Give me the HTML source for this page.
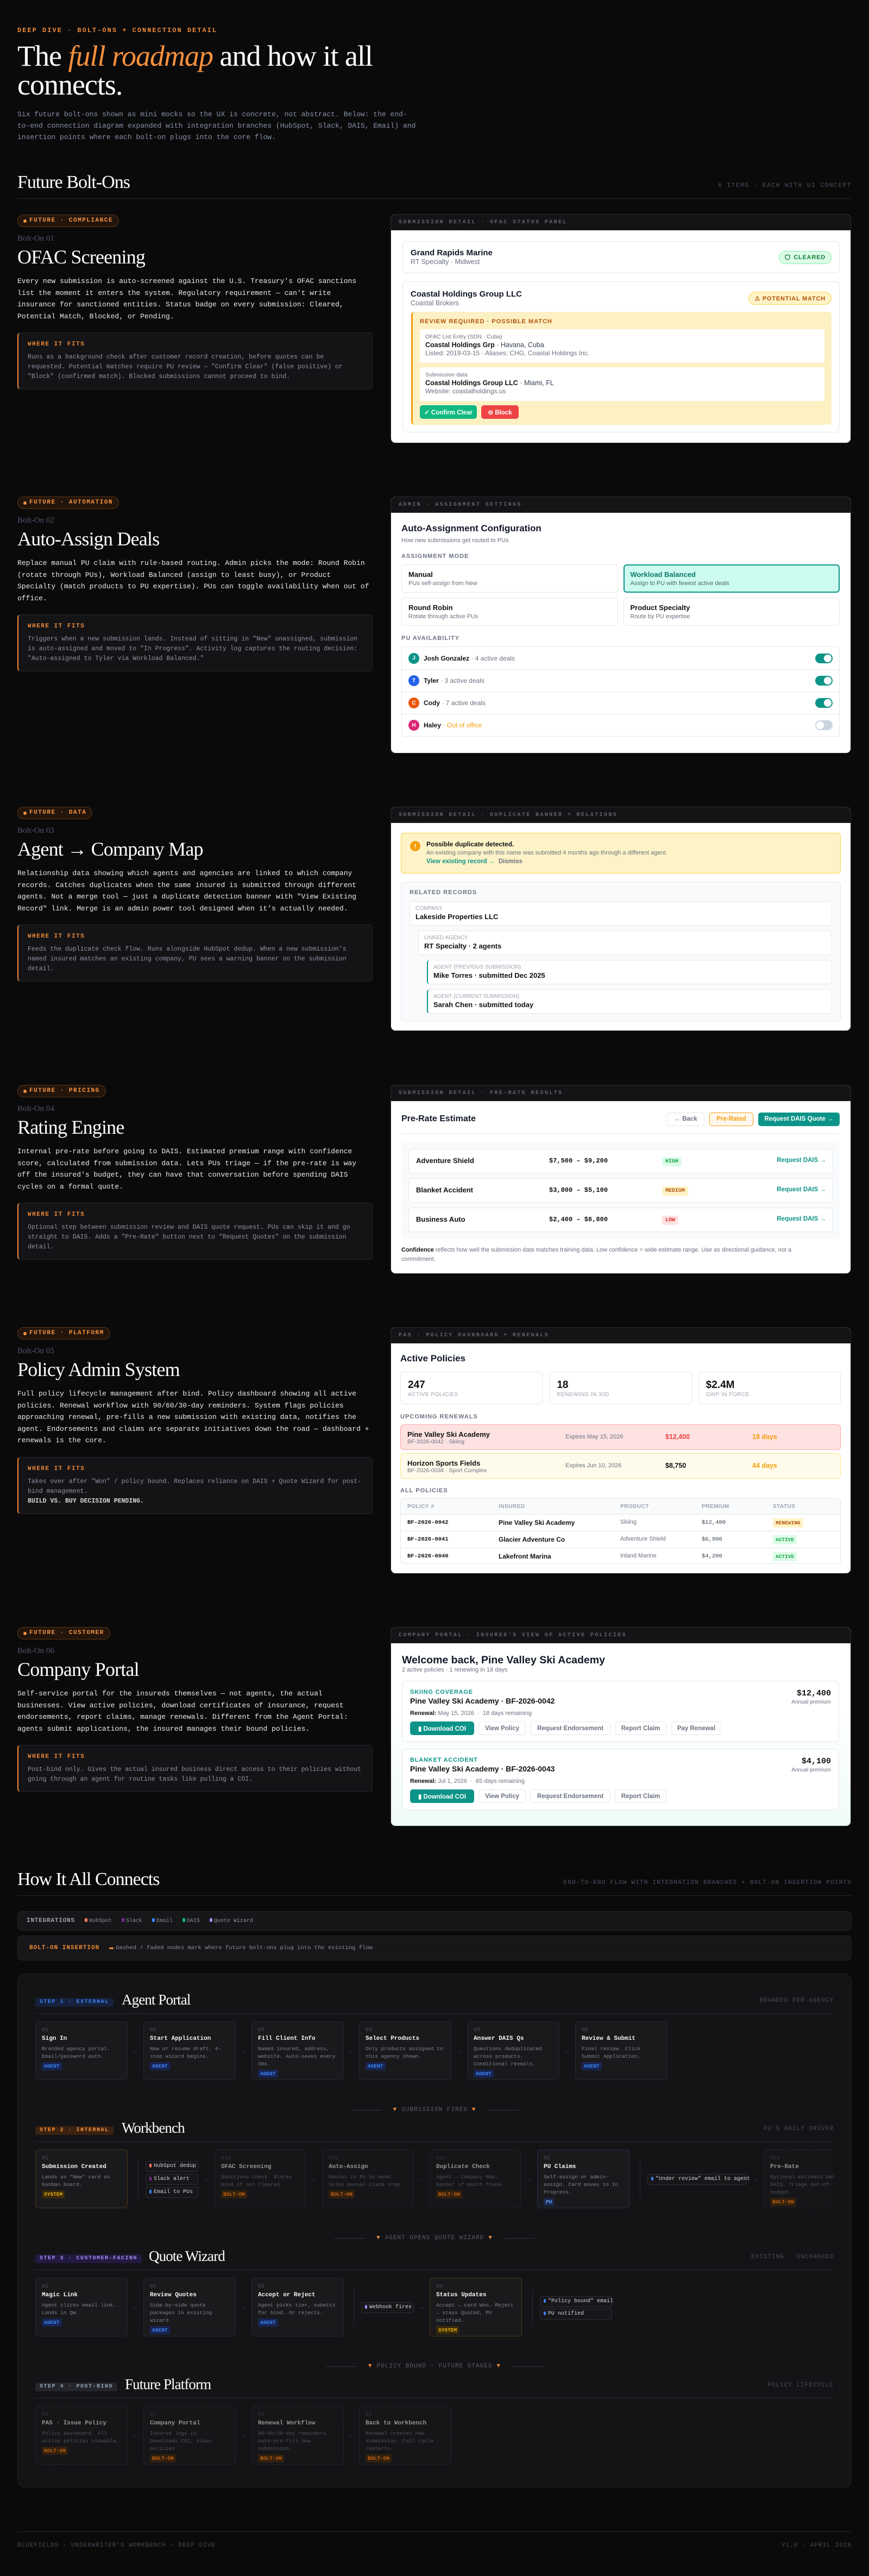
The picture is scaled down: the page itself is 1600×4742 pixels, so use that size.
<!DOCTYPE html>
<html><head><meta charset="utf-8"><style>
*{box-sizing:border-box;margin:0;padding:0}
body{width:1600px;height:4742px;background:#0a0a0b;position:relative;overflow:hidden;font-family:"Liberation Sans",sans-serif;color:#111}
.m{font-family:"Liberation Mono","DejaVu Sans Mono",monospace}
.s{font-family:"Liberation Serif",serif}
.a{position:absolute}
.nw{white-space:nowrap}
.eyebrow{left:32px;top:49px;font:700 12px/14px "Liberation Mono",monospace;color:#f08a36;letter-spacing:2px}
h1{position:absolute;left:32px;top:77px;font:400 54px/53px "Liberation Serif",serif;letter-spacing:-1px;color:#fff;white-space:nowrap}
h1 em{color:#f5903e}
.intro{left:32px;top:200px;font:13px/21px "Liberation Mono",monospace;color:#8892a6;white-space:nowrap}
.sech{font:400 34px/40px "Liberation Serif",serif;letter-spacing:-1px;color:#fff}
.secr{font:11px/14px "Liberation Mono",monospace;letter-spacing:1.6px;color:#4d5362}
.rule{height:1px;background:#27272b}
.left{position:absolute;left:32px;width:654px}
.pill{display:inline-flex;align-items:center;height:23px;padding:0 10px;border:1px solid #5c3514;background:#23150b;border-radius:12px;font:700 11px/1 "Liberation Mono",monospace;letter-spacing:1.5px;color:#f59342;white-space:nowrap}
.pill i{display:inline-block;width:6px;height:6px;border-radius:3px;background:#f59342;margin-right:5px}
.bolt{margin-top:12px;font:15px/18px "Liberation Serif",serif;color:#50566a}
.left h2{margin-top:5px;font:400 36px/40px "Liberation Serif",serif;letter-spacing:-.8px;color:#fff;white-space:nowrap}
.para{margin-top:14px;font:13px/21.5px "Liberation Mono",monospace;color:#ebebeb;white-space:nowrap}
.fits{margin-top:19px;background:#141417;border:1px solid #25252a;border-left:2px solid #f08a36;border-radius:6px;padding:14px 17px 13px}
.fl{font:700 11px/14px "Liberation Mono",monospace;letter-spacing:1.5px;color:#f08a36}
.ft{margin-top:8px;font:11.5px/18px "Liberation Mono",monospace;color:#8d93a0;white-space:nowrap}
.ft b{color:#d8d8d8}
.panel{position:absolute;left:719px;width:848px;background:#fff;border-radius:9px;overflow:hidden;border:1px solid #2a2a2e}
.ph{height:29px;background:#141417;padding-left:14px;font:700 10px/29px "Liberation Mono",monospace;letter-spacing:2.4px;color:#60646e;border-bottom:1px solid #222}
.card{border:1px solid #e5e7eb;border-radius:8px;background:#fff}
.t15{font-weight:700;font-size:15px;line-height:18px;color:#111827}
.sub{font-size:12.5px;line-height:15px;color:#6b7280}
.badge{display:inline-flex;align-items:center;height:24px;padding:0 10px;border-radius:12px;font-weight:700;font-size:11px;letter-spacing:.8px;white-space:nowrap}
.lab{font-weight:700;font-size:11px;line-height:14px;letter-spacing:1px;color:#6b7280;text-transform:uppercase}
.btn{display:inline-flex;align-items:center;justify-content:center;height:25px;border-radius:5px;font-weight:700;font-size:11.5px;white-space:nowrap}
.wb{background:#fff;border:1px solid #e5e7eb;color:#6b7280}
/* flow */
.fbar{position:absolute;left:32px;width:1536px;background:#17171a;border:1px solid #242428;border-radius:9px;display:flex;align-items:center;white-space:nowrap}
.sp{position:absolute;left:65px;height:16px;padding:0 8px;border-radius:3px;font:700 10px/16px "Liberation Mono",monospace;letter-spacing:1.5px;white-space:nowrap}
.st{position:absolute;font:400 27px/30px "Liberation Serif",serif;letter-spacing:-.9px;color:#fff;white-space:nowrap}
.sr{position:absolute;right:65px;font:11px/14px "Liberation Mono",monospace;letter-spacing:1px;color:#474c57;white-space:nowrap}
.srule{position:absolute;left:65px;width:1470px;height:1px;background:#29292e}
.fc{position:absolute;width:170px;height:108px;background:#1a1a1d;border:1px solid #26272d;border-radius:6px;padding:10px 11px 0;font-family:"Liberation Mono",monospace;overflow:hidden}
.fc .n{font-size:10px;line-height:12px;color:#4b4f58}
.fc .h{margin-top:2px;font-weight:700;font-size:11px;line-height:14px;color:#f4f4f5;white-space:nowrap}
.fc .d{margin-top:5px;font-size:9.5px;line-height:14px;color:#7d828c;white-space:nowrap}
.fc .g{display:inline-block;margin-top:2px;height:15px;padding:0 4px;border-radius:2px;font-size:9.5px;line-height:15px;font-weight:700}
.fc.dash{border:1px dashed #2c2c31;background:#161619}
.fc.dash .n,.fc.dash .h,.fc.dash .d{opacity:.55}
.ga{background:#172554;color:#3b82f6}
.gs{background:#3a2a0c;color:#eab308}
.gb{background:#33200e;color:#c2620f}
.gp{background:#1c2a4d;color:#60a5fa}
.ar{position:absolute;font:10px/10px "Liberation Mono",monospace;color:#4b4f58}
.chip{position:absolute;height:20px;border:1px solid #2f2f35;background:#17171a;border-radius:4px;padding:0 6px;font:10px/18px "Liberation Mono",monospace;color:#d4d4d8;white-space:nowrap}
.chip i{display:inline-block;width:4px;height:7px;border-radius:2px;margin-right:4px;vertical-align:-1px}
.vs{position:absolute;width:1px;background:#2a2a2f}
.div{position:absolute;left:0;width:1600px;display:flex;justify-content:center;align-items:center;font:11px/14px "Liberation Mono",monospace;letter-spacing:1px;color:#575d68;white-space:nowrap}
.div .ln{width:56px;height:1px;background:#333339;margin:0 14px}
.div .tr{color:#f08a36;font-size:11px;margin:0 8px}
</style></head><body>

<div class="a eyebrow">DEEP DIVE · BOLT-ONS + CONNECTION DETAIL</div>
<h1>The <em>full roadmap</em> and how it all<br>connects.</h1>
<div class="a intro">Six future bolt-ons shown as mini mocks so the UX is concrete, not abstract. Below: the end-<br>to-end connection diagram expanded with integration branches (HubSpot, Slack, DAIS, Email) and<br>insertion points where each bolt-on plugs into the core flow.</div>

<div class="a sech nw" style="left:32px;top:316px">Future Bolt-Ons</div>
<div class="a secr" style="right:32px;top:335px">6 ITEMS · EACH WITH UI CONCEPT</div>
<div class="a rule" style="left:32px;top:365px;width:1536px"></div>

<!-- SECTION 1 -->
<div class="left" style="top:395px">
<div class="pill"><i></i>FUTURE · COMPLIANCE</div>
<div class="bolt">Bolt-On 01</div>
<h2>OFAC Screening</h2>
<div class="para">Every new submission is auto-screened against the U.S. Treasury's OFAC sanctions<br>list the moment it enters the system. Regulatory requirement — can't write<br>insurance for sanctioned entities. Status badge on every submission: Cleared,<br>Potential Match, Blocked, or Pending.</div>
<div class="fits"><div class="fl">WHERE IT FITS</div><div class="ft">Runs as a background check after customer record creation, before quotes can be<br>requested. Potential matches require PU review — "Confirm Clear" (false positive) or<br>"Block" (confirmed match). Blocked submissions cannot proceed to bind.</div></div>
</div>
<div class="panel" style="top:394px;height:422px">
<div class="ph">SUBMISSION DETAIL · OFAC STATUS PANEL</div>
<div style="padding:20px 20px 0 21px">
 <div class="card" style="height:59px;display:flex;align-items:center;justify-content:space-between;padding:0 14px">
  <div><div class="t15">Grand Rapids Marine</div><div class="sub">RT Specialty · Midwest</div></div>
  <div class="badge" style="background:#dcfce7;border:1px solid #86efac;color:#15803d"><svg width="10" height="11" viewBox="0 0 10 11" style="margin-right:6px"><path d="M5 1 L9 2.5 V5.5 C9 8 7 9.5 5 10 C3 9.5 1 8 1 5.5 V2.5 Z" fill="none" stroke="#15803d" stroke-width="1.4"/></svg>CLEARED</div>
 </div>
 <div class="card" style="margin-top:15px;height:278px;padding:14px 14px 0">
  <div style="display:flex;justify-content:space-between;align-items:flex-start">
   <div><div class="t15">Coastal Holdings Group LLC</div><div class="sub">Coastal Brokers</div></div>
   <div class="badge" style="margin-top:4px;background:#fef3c7;border:1px solid #fcd34d;color:#b45309">⚠ POTENTIAL MATCH</div>
  </div>
  <div style="margin-top:8px;margin-left:1px;height:208px;background:#fdf1c4;border-left:3px solid #f59e0b;border-radius:6px;padding:11px 13px 0">
   <div style="font-weight:700;font-size:11px;line-height:14px;letter-spacing:1px;color:#b45309">REVIEW REQUIRED · POSSIBLE MATCH</div>
   <div style="margin-top:7px;height:62px;background:#fff;border-radius:4px;padding:7px 10px 0;line-height:15px">
    <div style="font-size:10.5px;color:#6b7280">OFAC List Entry (SDN · Cuba)</div>
    <div style="font-size:12.5px;color:#374151"><b style="color:#111">Coastal Holdings Grp</b> · Havana, Cuba</div>
    <div style="font-size:12px;color:#6b7280">Listed: 2019-03-15 · Aliases: CHG, Coastal Holdings Inc.</div>
   </div>
   <div style="margin-top:8px;height:62px;background:#fff;border-radius:4px;padding:7px 10px 0;line-height:15px">
    <div style="font-size:10.5px;color:#6b7280">Submission data</div>
    <div style="font-size:12.5px;color:#374151"><b style="color:#111">Coastal Holdings Group LLC</b> · Miami, FL</div>
    <div style="font-size:12px;color:#6b7280">Website: coastalholdings.us</div>
   </div>
   <div style="margin-top:8px;display:flex;gap:8px">
    <div class="btn" style="width:105px;background:#10b981;color:#fff">✓ Confirm Clear</div>
    <div class="btn" style="width:69px;background:#ef4444;color:#fff">⊖ Block</div>
   </div>
  </div>
 </div>
</div></div>

<!-- SECTION 2 -->
<div class="left" style="top:914px">
<div class="pill"><i></i>FUTURE · AUTOMATION</div>
<div class="bolt">Bolt-On 02</div>
<h2>Auto-Assign Deals</h2>
<div class="para">Replace manual PU claim with rule-based routing. Admin picks the mode: Round Robin<br>(rotate through PUs), Workload Balanced (assign to least busy), or Product<br>Specialty (match products to PU expertise). PUs can toggle availability when out of<br>office.</div>
<div class="fits"><div class="fl">WHERE IT FITS</div><div class="ft">Triggers when a new submission lands. Instead of sitting in "New" unassigned, submission<br>is auto-assigned and moved to "In Progress". Activity log captures the routing decision:<br>"Auto-assigned to Tyler via Workload Balanced."</div></div>
</div>
<div class="panel" style="top:914px;height:473px">
<div class="ph">ADMIN · ASSIGNMENT SETTINGS</div>
<div style="padding:18px 20px 0 19px">
 <div style="font-weight:700;font-size:17px;line-height:22px;color:#111827">Auto-Assignment Configuration</div>
 <div style="margin-top:3px;font-size:11px;line-height:16px;color:#6b7280">How new submissions get routed to PUs</div>
 <div class="lab" style="margin-top:14px">Assignment Mode</div>
 <div style="margin-top:8px;display:grid;grid-template-columns:1fr 1fr;gap:9px 10px">
  <div class="card" style="height:52px;padding:10px 12px 0;border-radius:6px"><div style="font-weight:700;font-size:13px;line-height:16px">Manual</div><div style="font-size:11px;line-height:16px;color:#6b7280">PUs self-assign from New</div></div>
  <div style="height:52px;padding:9px 11px 0;border-radius:6px;border:2px solid #0d9488;background:#ccfbef"><div style="font-weight:700;font-size:13px;line-height:16px;color:#0f766e">Workload Balanced</div><div style="font-size:11px;line-height:16px;color:#4b6b66">Assign to PU with fewest active deals</div></div>
  <div class="card" style="height:52px;padding:10px 12px 0;border-radius:6px"><div style="font-weight:700;font-size:13px;line-height:16px">Round Robin</div><div style="font-size:11px;line-height:16px;color:#6b7280">Rotate through active PUs</div></div>
  <div class="card" style="height:52px;padding:10px 12px 0;border-radius:6px"><div style="font-weight:700;font-size:13px;line-height:16px">Product Specialty</div><div style="font-size:11px;line-height:16px;color:#6b7280">Route by PU expertise</div></div>
 </div>
 <div class="lab" style="margin-top:16px">PU Availability</div>
 <div style="margin-top:8px;border:1px solid #e5e7eb;border-radius:6px">
  <div style="height:41px;display:flex;align-items:center;padding:0 12px;font-size:12px"><span style="width:20px;height:20px;border-radius:10px;background:#0d9488;color:#fff;font-size:10px;font-weight:700;display:inline-flex;align-items:center;justify-content:center;margin-right:8px">J</span><b>Josh Gonzalez</b><span style="color:#6b7280">&nbsp;· 4 active deals</span><span style="margin-left:auto;width:32px;height:18px;border-radius:9px;background:#0d9488;position:relative"><span style="position:absolute;right:2px;top:2px;width:14px;height:14px;border-radius:7px;background:#fff"></span></span></div>
  <div style="height:41px;display:flex;align-items:center;padding:0 12px;font-size:12px;border-top:1px solid #e5e7eb"><span style="width:20px;height:20px;border-radius:10px;background:#2563eb;color:#fff;font-size:10px;font-weight:700;display:inline-flex;align-items:center;justify-content:center;margin-right:8px">T</span><b>Tyler</b><span style="color:#6b7280">&nbsp;· 3 active deals</span><span style="margin-left:auto;width:32px;height:18px;border-radius:9px;background:#0d9488;position:relative"><span style="position:absolute;right:2px;top:2px;width:14px;height:14px;border-radius:7px;background:#fff"></span></span></div>
  <div style="height:41px;display:flex;align-items:center;padding:0 12px;font-size:12px;border-top:1px solid #e5e7eb"><span style="width:20px;height:20px;border-radius:10px;background:#ea580c;color:#fff;font-size:10px;font-weight:700;display:inline-flex;align-items:center;justify-content:center;margin-right:8px">C</span><b>Cody</b><span style="color:#6b7280">&nbsp;· 7 active deals</span><span style="margin-left:auto;width:32px;height:18px;border-radius:9px;background:#0d9488;position:relative"><span style="position:absolute;right:2px;top:2px;width:14px;height:14px;border-radius:7px;background:#fff"></span></span></div>
  <div style="height:41px;display:flex;align-items:center;padding:0 12px;font-size:12px;border-top:1px solid #e5e7eb"><span style="width:20px;height:20px;border-radius:10px;background:#db2777;color:#fff;font-size:10px;font-weight:700;display:inline-flex;align-items:center;justify-content:center;margin-right:8px">H</span><b>Haley</b><span style="color:#f59e0b">&nbsp;· Out of office</span><span style="margin-left:auto;width:32px;height:18px;border-radius:9px;background:#cbd5e1;position:relative"><span style="position:absolute;left:2px;top:2px;width:14px;height:14px;border-radius:7px;background:#fff"></span></span></div>
 </div>
</div></div>

<!-- SECTION 3 -->
<div class="left" style="top:1485px">
<div class="pill"><i></i>FUTURE · DATA</div>
<div class="bolt">Bolt-On 03</div>
<h2>Agent → Company Map</h2>
<div class="para">Relationship data showing which agents and agencies are linked to which company<br>records. Catches duplicates when the same insured is submitted through different<br>agents. Not a merge tool — just a duplicate detection banner with "View Existing<br>Record" link. Merge is an admin power tool designed when it's actually needed.</div>
<div class="fits"><div class="fl">WHERE IT FITS</div><div class="ft">Feeds the duplicate check flow. Runs alongside HubSpot dedup. When a new submission's<br>named insured matches an existing company, PU sees a warning banner on the submission<br>detail.</div></div>
</div>
<div class="panel" style="top:1485px;height:413px">
<div class="ph">SUBMISSION DETAIL · DUPLICATE BANNER + RELATIONS</div>
<div style="padding:18px 18px 0 18px">
 <div style="height:75px;background:#fef3c7;border:1.5px solid #fcd34d;border-radius:6px;position:relative;padding:12px 0 0 46px">
  <span style="position:absolute;left:16px;top:14px;width:19px;height:19px;border-radius:10px;background:#f59e0b;color:#fff;font-weight:700;font-size:12px;display:flex;align-items:center;justify-content:center">!</span>
  <div style="font-weight:700;font-size:12px;line-height:16px;color:#111">Possible duplicate detected.</div>
  <div style="font-size:11px;line-height:16px;color:#6b7280">An existing company with this name was submitted 4 months ago through a different agent.</div>
  <div style="font-weight:700;font-size:11.5px;line-height:17px"><span style="color:#0d9488">View existing record →</span>&nbsp; <span style="color:#6b7280">Dismiss</span></div>
 </div>
 <div style="margin-top:15px;height:257px;background:#f8fafc;border:1px solid #e5e7eb;border-radius:6px;padding:12px 15px 0">
  <div class="lab">Related Records</div>
  <div class="card" style="margin-top:9px;height:45px;border-radius:5px;padding:7px 10px 0"><div style="font-size:10px;line-height:12px;color:#9ca3af">COMPANY</div><div style="font-weight:700;font-size:13px;line-height:18px">Lakeside Properties LLC</div></div>
  <div class="card" style="margin-top:9px;margin-left:16px;height:45px;border-radius:5px;padding:7px 10px 0"><div style="font-size:10px;line-height:12px;color:#9ca3af">LINKED AGENCY</div><div style="font-weight:700;font-size:13px;line-height:18px">RT Specialty · 2 agents</div></div>
  <div class="card" style="margin-top:9px;margin-left:32px;height:45px;border-radius:5px;border-left:2px solid #0d9488;padding:7px 10px 0"><div style="font-size:10px;line-height:12px;color:#9ca3af">AGENT (PREVIOUS SUBMISSION)</div><div style="font-weight:700;font-size:13px;line-height:18px">Mike Torres · submitted Dec 2025</div></div>
  <div class="card" style="margin-top:9px;margin-left:32px;height:45px;border-radius:5px;border-left:2px solid #0d9488;padding:7px 10px 0"><div style="font-size:10px;line-height:12px;color:#9ca3af">AGENT (CURRENT SUBMISSION)</div><div style="font-weight:700;font-size:13px;line-height:18px">Sarah Chen · submitted today</div></div>
 </div>
</div></div>

<!-- SECTION 4 -->
<div class="left" style="top:1997px">
<div class="pill"><i></i>FUTURE · PRICING</div>
<div class="bolt">Bolt-On 04</div>
<h2>Rating Engine</h2>
<div class="para">Internal pre-rate before going to DAIS. Estimated premium range with confidence<br>score, calculated from submission data. Lets PUs triage — if the pre-rate is way<br>off the insured's budget, they can have that conversation before spending DAIS<br>cycles on a formal quote.</div>
<div class="fits"><div class="fl">WHERE IT FITS</div><div class="ft">Optional step between submission review and DAIS quote request. PUs can skip it and go<br>straight to DAIS. Adds a "Pre-Rate" button next to "Request Quotes" on the submission<br>detail.</div></div>
</div>
<div class="panel" style="top:1997px;height:348px">
<div class="ph">SUBMISSION DETAIL · PRE-RATE RESULTS</div>
<div style="padding:19px 20px 0 19px">
 <div style="height:28px;display:flex;align-items:center">
  <div style="font-weight:700;font-size:16px;color:#111827">Pre-Rate Estimate</div>
  <div style="margin-left:auto;display:flex;gap:9px">
   <div class="btn wb" style="width:69px">← Back</div>
   <div class="btn" style="width:81px;background:#fff7ed;border:1.5px solid #f59e0b;color:#f59e0b">Pre-Rated</div>
   <div class="btn" style="width:150px;background:#0d9488;color:#fff">Request DAIS Quote →</div>
  </div>
 </div>
 <div style="margin-top:12px;height:1px;background:#e5e7eb"></div>
 <div style="margin-top:16px;height:178px;background:#f8fafc;border-radius:6px;padding:12px 13px 0">
  <div class="card" style="height:45px;border-radius:5px;position:relative;font-size:13px">
   <b class="a" style="left:13px;top:13px">Adventure Shield</b><b class="a m" style="left:258px;top:14px;font-size:12px">$7,500 – $9,200</b>
   <span class="a" style="left:466px;top:14px;height:17px;padding:0 6px;background:#dcfce7;color:#16a34a;font:700 10px/17px 'Liberation Mono',monospace;border-radius:3px">HIGH</span>
   <b class="a" style="right:11px;top:14px;font-size:11.5px;color:#0d9488">Request DAIS →</b></div>
  <div class="card" style="margin-top:9px;height:45px;border-radius:5px;position:relative;font-size:13px">
   <b class="a" style="left:13px;top:13px">Blanket Accident</b><b class="a m" style="left:258px;top:14px;font-size:12px">$3,800 – $5,100</b>
   <span class="a" style="left:466px;top:14px;height:17px;padding:0 6px;background:#fef3c7;color:#b45309;font:700 10px/17px 'Liberation Mono',monospace;border-radius:3px">MEDIUM</span>
   <b class="a" style="right:11px;top:14px;font-size:11.5px;color:#0d9488">Request DAIS →</b></div>
  <div class="card" style="margin-top:9px;height:45px;border-radius:5px;position:relative;font-size:13px">
   <b class="a" style="left:13px;top:13px">Business Auto</b><b class="a m" style="left:258px;top:14px;font-size:12px">$2,400 – $6,800</b>
   <span class="a" style="left:466px;top:14px;height:17px;padding:0 6px;background:#fee2e2;color:#dc2626;font:700 10px/17px 'Liberation Mono',monospace;border-radius:3px">LOW</span>
   <b class="a" style="right:11px;top:14px;font-size:11.5px;color:#0d9488">Request DAIS →</b></div>
 </div>
 <div class="nw" style="margin-top:12px;font-size:11px;line-height:17px;color:#6b7280"><b style="color:#111">Confidence</b> reflects how well the submission data matches training data. Low confidence = wide estimate range. Use as directional guidance, not a<br>commitment.</div>
</div></div>

<!-- SECTION 5 -->
<div class="left" style="top:2443px">
<div class="pill"><i></i>FUTURE · PLATFORM</div>
<div class="bolt">Bolt-On 05</div>
<h2>Policy Admin System</h2>
<div class="para">Full policy lifecycle management after bind. Policy dashboard showing all active<br>policies. Renewal workflow with 90/60/30-day reminders. System flags policies<br>approaching renewal, pre-fills a new submission with existing data, notifies the<br>agent. Endorsements and claims are separate initiatives down the road — dashboard +<br>renewals is the core.</div>
<div class="fits"><div class="fl">WHERE IT FITS</div><div class="ft">Takes over after "Won" / policy bound. Replaces reliance on DAIS + Quote Wizard for post-<br>bind management.<br><b>BUILD VS. BUY DECISION PENDING.</b></div></div>
</div>
<div class="panel" style="top:2443px;height:454px">
<div class="ph">PAS · POLICY DASHBOARD + RENEWALS</div>
<div style="padding:17px 18px 0 17px">
 <div style="font-weight:700;font-size:17px;line-height:22px;color:#111827">Active Policies</div>
 <div style="margin-top:13px;display:grid;grid-template-columns:1fr 1fr 1fr;gap:12px">
  <div class="card" style="height:60px;border-radius:6px;padding:13px 13px 0"><div style="font-weight:700;font-size:19px;line-height:22px">247</div><div style="font-size:10px;line-height:14px;color:#9ca3af;letter-spacing:.5px">ACTIVE POLICIES</div></div>
  <div class="card" style="height:60px;border-radius:6px;padding:13px 13px 0"><div style="font-weight:700;font-size:19px;line-height:22px">18</div><div style="font-size:10px;line-height:14px;color:#9ca3af;letter-spacing:.5px">RENEWING IN 30D</div></div>
  <div class="card" style="height:60px;border-radius:6px;padding:13px 13px 0"><div style="font-weight:700;font-size:19px;line-height:22px">$2.4M</div><div style="font-size:10px;line-height:14px;color:#9ca3af;letter-spacing:.5px">GWP IN FORCE</div></div>
 </div>
 <div class="lab" style="margin-top:16px">Upcoming Renewals</div>
 <div style="margin-top:7px;height:47px;background:#fee2e2;border:1px solid #fca5a5;border-radius:6px;position:relative">
  <div class="a" style="left:12px;top:10px"><div style="font-weight:700;font-size:13px;line-height:15px">Pine Valley Ski Academy</div><div style="font-size:10.5px;line-height:13px;color:#6b7280">BF-2026-0042 · Skiing</div></div>
  <span class="a" style="left:303px;top:16px;font-size:11px;color:#6b7280">Expires May 15, 2026</span>
  <b class="a" style="left:487px;top:15px;font-size:12.5px;color:#ef4444">$12,400</b>
  <b class="a" style="left:647px;top:15px;font-size:12.5px;color:#f59e0b">18 days</b></div>
 <div style="margin-top:6px;height:47px;background:#fffbeb;border:1px solid #fde68a;border-radius:6px;position:relative">
  <div class="a" style="left:12px;top:10px"><div style="font-weight:700;font-size:13px;line-height:15px">Horizon Sports Fields</div><div style="font-size:10.5px;line-height:13px;color:#6b7280">BF-2026-0038 · Sport Complex</div></div>
  <span class="a" style="left:303px;top:16px;font-size:11px;color:#6b7280">Expires Jun 10, 2026</span>
  <b class="a" style="left:487px;top:15px;font-size:12.5px;color:#111">$8,750</b>
  <b class="a" style="left:647px;top:15px;font-size:12.5px;color:#f59e0b">44 days</b></div>
 <div class="lab" style="margin-top:15px">All Policies</div>
 <div style="margin-top:7px;border:1px solid #e5e7eb;border-radius:6px;overflow:hidden;position:relative;height:121px">
  <div style="height:29px;background:#f8fafc;border-bottom:1px solid #e5e7eb;position:relative;font-weight:700;font-size:10px;color:#9ca3af;letter-spacing:.5px">
   <span class="a" style="left:12px;top:9px">POLICY #</span><span class="a" style="left:180px;top:9px">INSURED</span><span class="a" style="left:404px;top:9px">PRODUCT</span><span class="a" style="left:554px;top:9px">PREMIUM</span><span class="a" style="left:685px;top:9px">STATUS</span></div>
  <div style="height:31px;border-bottom:1px solid #e5e7eb;position:relative;font-size:12px">
   <b class="a m" style="left:12px;top:9px;font-size:10.5px">BF-2026-0042</b><b class="a" style="left:180px;top:8px">Pine Valley Ski Academy</b><span class="a" style="left:404px;top:8px;color:#6b7280;font-size:11px">Skiing</span><span class="a m" style="left:554px;top:9px;font-size:10.5px;color:#374151">$12,400</span><span class="a" style="left:685px;top:7px;height:17px;padding:0 5px;background:#fef3c7;color:#b45309;font:700 9.5px/17px 'Liberation Mono',monospace">RENEWING</span></div>
  <div style="height:31px;border-bottom:1px solid #e5e7eb;position:relative;font-size:12px">
   <b class="a m" style="left:12px;top:9px;font-size:10.5px">BF-2026-0041</b><b class="a" style="left:180px;top:8px">Glacier Adventure Co</b><span class="a" style="left:404px;top:8px;color:#6b7280;font-size:11px">Adventure Shield</span><span class="a m" style="left:554px;top:9px;font-size:10.5px;color:#374151">$6,900</span><span class="a" style="left:685px;top:7px;height:17px;padding:0 5px;background:#dcfce7;color:#16a34a;font:700 9.5px/17px 'Liberation Mono',monospace">ACTIVE</span></div>
  <div style="height:30px;position:relative;font-size:12px">
   <b class="a m" style="left:12px;top:9px;font-size:10.5px">BF-2026-0040</b><b class="a" style="left:180px;top:8px">Lakefront Marina</b><span class="a" style="left:404px;top:8px;color:#6b7280;font-size:11px">Inland Marine</span><span class="a m" style="left:554px;top:9px;font-size:10.5px;color:#374151">$4,200</span><span class="a" style="left:685px;top:7px;height:17px;padding:0 5px;background:#dcfce7;color:#16a34a;font:700 9.5px/17px 'Liberation Mono',monospace">ACTIVE</span></div>
 </div>
</div></div>

<!-- SECTION 6 -->
<div class="left" style="top:2995px">
<div class="pill"><i></i>FUTURE · CUSTOMER</div>
<div class="bolt">Bolt-On 06</div>
<h2>Company Portal</h2>
<div class="para">Self-service portal for the insureds themselves — not agents, the actual<br>businesses. View active policies, download certificates of insurance, request<br>endorsements, report claims, manage renewals. Different from the Agent Portal:<br>agents submit applications, the insured manages their bound policies.</div>
<div class="fits"><div class="fl">WHERE IT FITS</div><div class="ft">Post-bind only. Gives the actual insured business direct access to their policies without<br>going through an agent for routine tasks like pulling a COI.</div></div>
</div>
<div class="panel" style="top:2995px;height:367px">
<div class="ph">COMPANY PORTAL · INSURED'S VIEW OF ACTIVE POLICIES</div>
<div style="padding:20px 21px 0 20px;height:338px;background:linear-gradient(#fff 35%,#effcf9)">
 <div style="font-weight:700;font-size:19.5px;line-height:22px;color:#111827">Welcome back, Pine Valley Ski Academy</div>
 <div style="font-size:11px;line-height:14px;color:#6b7280">2 active policies · 1 renewing in 18 days</div>
 <div class="card" style="margin-top:13px;height:113px;position:relative;padding:13px 14px 0">
  <div style="font-weight:700;font-size:11px;line-height:14px;letter-spacing:.8px;color:#0d9488">SKIING COVERAGE</div>
  <div style="font-weight:700;font-size:14px;line-height:18px">Pine Valley Ski Academy · BF-2026-0042</div>
  <div style="margin-top:6px;font-size:11px;line-height:16px;color:#6b7280"><b style="color:#111">Renewal:</b> May 15, 2026 &nbsp;· &nbsp;18 days remaining</div>
  <div style="margin-top:7px;display:flex;gap:8px"><div class="btn" style="width:118px;background:#0d9488;color:#fff">▮ Download COI</div><div class="btn wb" style="width:87px">View Policy</div><div class="btn wb" style="width:148px">Request Endorsement</div><div class="btn wb" style="width:95px">Report Claim</div><div class="btn wb" style="width:94px">Pay Renewal</div></div>
  <div class="a" style="right:14px;top:14px;text-align:right"><div class="m" style="font-weight:700;font-size:15px;line-height:18px">$12,400</div><div style="font-size:10px;line-height:14px;color:#6b7280">Annual premium</div></div>
 </div>
 <div class="card" style="margin-top:12px;height:113px;position:relative;padding:13px 14px 0">
  <div style="font-weight:700;font-size:11px;line-height:14px;letter-spacing:.8px;color:#0d9488">BLANKET ACCIDENT</div>
  <div style="font-weight:700;font-size:14px;line-height:18px">Pine Valley Ski Academy · BF-2026-0043</div>
  <div style="margin-top:6px;font-size:11px;line-height:16px;color:#6b7280"><b style="color:#111">Renewal:</b> Jul 1, 2026 &nbsp;· &nbsp;65 days remaining</div>
  <div style="margin-top:7px;display:flex;gap:8px"><div class="btn" style="width:118px;background:#0d9488;color:#fff">▮ Download COI</div><div class="btn wb" style="width:87px">View Policy</div><div class="btn wb" style="width:148px">Request Endorsement</div><div class="btn wb" style="width:95px">Report Claim</div></div>
  <div class="a" style="right:14px;top:14px;text-align:right"><div class="m" style="font-weight:700;font-size:15px;line-height:18px">$4,100</div><div style="font-size:10px;line-height:14px;color:#6b7280">Annual premium</div></div>
 </div>
</div></div>

<!-- HOW IT ALL CONNECTS -->
<div class="a sech nw" style="left:32px;top:3440px">How It All Connects</div>
<div class="a secr" style="right:32px;top:3459px;letter-spacing:1.2px">END-TO-END FLOW WITH INTEGRATION BRANCHES + BOLT-ON INSERTION POINTS</div>
<div class="a rule" style="left:32px;top:3489px;width:1536px"></div>

<div class="fbar" style="top:3518px;height:36px;padding-left:16px;font:10px 'Liberation Mono',monospace;color:#8b8f99">
 <b style="font-size:11px;letter-spacing:.8px;color:#9ca3af;margin-right:18px">INTEGRATIONS</b>
 <span style="margin-right:18px"><i style="display:inline-block;width:5px;height:7px;border-radius:2px;background:#ff7a59;margin-right:3px"></i>HubSpot</span>
 <span style="margin-right:18px"><i style="display:inline-block;width:5px;height:7px;border-radius:2px;background:#7e2a8c;margin-right:3px"></i>Slack</span>
 <span style="margin-right:18px"><i style="display:inline-block;width:5px;height:7px;border-radius:2px;background:#3b82f6;margin-right:3px"></i>Email</span>
 <span style="margin-right:18px"><i style="display:inline-block;width:5px;height:7px;border-radius:2px;background:#10b981;margin-right:3px"></i>DAIS</span>
 <span><i style="display:inline-block;width:5px;height:7px;border-radius:2px;background:#a78bfa;margin-right:3px"></i>Quote Wizard</span>
</div>
<div class="fbar" style="top:3563px;height:46px;padding-left:21px;font:10.5px 'Liberation Mono',monospace;color:#8b8f99">
 <b style="font-size:11px;letter-spacing:1px;color:#f08a36;margin-right:18px">BOLT-ON INSERTION</b>
 <span style="display:inline-block;width:8px;height:3px;background:#f08a36;margin-right:4px"></span>Dashed / faded nodes mark where future bolt-ons plug into the existing flow
</div>

<div class="a" style="left:32px;top:3633px;width:1536px;height:946px;background:#141417;border:1px solid #232327;border-radius:14px"></div>

<!-- step 1 -->
<div class="sp" style="top:3678px;background:#16213d;color:#3b82f6">STEP 1 · EXTERNAL</div>
<div class="st" style="left:224px;top:3666px">Agent Portal</div>
<div class="sr" style="top:3676px">BRANDED PER-AGENCY</div>
<div class="srule" style="top:3706px"></div>
<div class="fc" style="left:65px;top:3721px"><div class="n">01</div><div class="h">Sign In</div><div class="d">Branded agency portal.<br>Email/password auth.</div><span class="g ga">AGENT</span></div>
<div class="ar" style="left:245px;top:3772px">→</div>
<div class="fc" style="left:264px;top:3721px"><div class="n">02</div><div class="h">Start Application</div><div class="d">New or resume draft. 4-<br>step wizard begins.</div><span class="g ga">AGENT</span></div>
<div class="ar" style="left:444px;top:3772px">→</div>
<div class="fc" style="left:463px;top:3721px"><div class="n">03</div><div class="h">Fill Client Info</div><div class="d">Named insured, address,<br>website. Auto-saves every<br>30s.</div><span class="g ga">AGENT</span></div>
<div class="ar" style="left:642px;top:3772px">→</div>
<div class="fc" style="left:661px;top:3721px"><div class="n">04</div><div class="h">Select Products</div><div class="d">Only products assigned to<br>this agency shown.</div><span class="g ga">AGENT</span></div>
<div class="ar" style="left:841px;top:3772px">→</div>
<div class="fc" style="left:860px;top:3721px"><div class="n">05</div><div class="h">Answer DAIS Qs</div><div class="d">Questions deduplicated<br>across products.<br>Conditional reveals.</div><span class="g ga">AGENT</span></div>
<div class="ar" style="left:1040px;top:3772px">→</div>
<div class="fc" style="left:1059px;top:3721px"><div class="n">06</div><div class="h">Review &amp; Submit</div><div class="d">Final review. Click<br>Submit Application.</div><span class="g ga">AGENT</span></div>

<div class="div" style="top:3877px"><span class="ln"></span><span class="tr">▼</span>SUBMISSION FIRES<span class="tr">▼</span><span class="ln"></span></div>

<!-- step 2 -->
<div class="sp" style="top:3914px;background:#3a2210;color:#fb923c">STEP 2 · INTERNAL</div>
<div class="st" style="left:224px;top:3902px">Workbench</div>
<div class="sr" style="top:3912px">PU'S DAILY DRIVER</div>
<div class="srule" style="top:3942px"></div>
<div class="fc" style="left:65px;top:3957px;border-color:#4f3614"><div class="n">01</div><div class="h">Submission Created</div><div class="d">Lands as "New" card on<br>Kanban board.</div><span class="g gs">SYSTEM</span></div>
<div class="vs" style="left:254px;top:3977px;height:70px"></div>
<div class="chip" style="left:268px;top:3978px;width:97px"><i style="background:#ff7a59"></i>HubSpot dedup</div>
<div class="chip" style="left:268px;top:4002px;width:97px"><i style="background:#7e2a8c"></i>Slack alert</div>
<div class="chip" style="left:268px;top:4026px;width:97px"><i style="background:#3b82f6"></i>Email to PUs</div>
<div class="ar" style="left:376px;top:4008px">→</div>
<div class="fc dash" style="left:395px;top:3957px;width:168px"><div class="n">01a</div><div class="h">OFAC Screening</div><div class="d">Sanctions check. Blocks<br>bind if not cleared.</div><span class="g gb">BOLT-ON</span></div>
<div class="ar" style="left:574px;top:4008px">→</div>
<div class="fc dash" style="left:593px;top:3957px;width:168px"><div class="n">01b</div><div class="h">Auto-Assign</div><div class="d">Routes to PU by mode.<br>Skips manual claim step.</div><span class="g gb">BOLT-ON</span></div>
<div class="ar" style="left:772px;top:4008px">→</div>
<div class="fc dash" style="left:791px;top:3957px;width:168px"><div class="n">01c</div><div class="h">Duplicate Check</div><div class="d">Agent → Company Map.<br>Banner if match found.</div><span class="g gb">BOLT-ON</span></div>
<div class="ar" style="left:971px;top:4008px">→</div>
<div class="fc" style="left:989px;top:3957px;border-color:#233150"><div class="n">02</div><div class="h">PU Claims</div><div class="d">Self-assign or admin-<br>assign. Card moves to In<br>Progress.</div><span class="g gp">PU</span></div>
<div class="vs" style="left:1178px;top:3977px;height:70px"></div>
<div class="chip" style="left:1192px;top:4002px;width:183px"><i style="background:#3b82f6"></i>"Under review" email to agent</div>
<div class="ar" style="left:1387px;top:4008px">→</div>
<div style="position:absolute;left:1406px;top:3957px;width:129px;height:108px;overflow:hidden"><div class="fc dash" style="left:0;top:0"><div class="n">02a</div><div class="h">Pre-Rate</div><div class="d">Optional estimate before<br>DAIS. Triage out-of-<br>budget.</div><span class="g gb">BOLT-ON</span></div></div>

<div class="div" style="top:4113px"><span class="ln"></span><span class="tr">▼</span>AGENT OPENS QUOTE WIZARD<span class="tr">▼</span><span class="ln"></span></div>

<!-- step 3 -->
<div class="sp" style="top:4150px;background:#221a40;color:#a78bfa">STEP 3 · CUSTOMER-FACING</div>
<div class="st" style="left:274px;top:4138px">Quote Wizard</div>
<div class="sr" style="top:4148px">EXISTING · UNCHANGED</div>
<div class="srule" style="top:4178px"></div>
<div class="fc" style="left:65px;top:4193px"><div class="n">01</div><div class="h">Magic Link</div><div class="d">Agent clicks email link.<br>Lands in QW.</div><span class="g ga">AGENT</span></div>
<div class="ar" style="left:245px;top:4244px">→</div>
<div class="fc" style="left:264px;top:4193px"><div class="n">02</div><div class="h">Review Quotes</div><div class="d">Side-by-side quote<br>packages in existing<br>wizard.</div><span class="g ga">AGENT</span></div>
<div class="ar" style="left:444px;top:4244px">→</div>
<div class="fc" style="left:463px;top:4193px"><div class="n">03</div><div class="h">Accept or Reject</div><div class="d">Agent picks tier, submits<br>for bind. Or rejects.</div><span class="g ga">AGENT</span></div>
<div class="vs" style="left:651px;top:4213px;height:70px"></div>
<div class="chip" style="left:665px;top:4238px;width:97px"><i style="background:#a78bfa"></i>Webhook fires</div>
<div class="ar" style="left:774px;top:4244px">→</div>
<div class="fc" style="left:791px;top:4193px;border-color:#4f3614"><div class="n">04</div><div class="h">Status Updates</div><div class="d">Accept → card Won. Reject<br>→ stays Quoted, PU<br>notified.</div><span class="g gs">SYSTEM</span></div>
<div class="vs" style="left:980px;top:4213px;height:70px"></div>
<div class="chip" style="left:994px;top:4227px;width:133px"><i style="background:#3b82f6"></i>"Policy bound" email</div>
<div class="chip" style="left:994px;top:4250px;width:133px"><i style="background:#3b82f6"></i>PU notified</div>

<div class="div" style="top:4349px"><span class="ln"></span><span class="tr">▼</span>POLICY BOUND · FUTURE STAGES<span class="tr">▼</span><span class="ln"></span></div>

<!-- step 4 -->
<div class="sp" style="top:4386px;background:#25262b;color:#94a3b8">STEP 4 · POST-BIND</div>
<div class="st" style="left:230px;top:4374px">Future Platform</div>
<div class="sr" style="top:4384px">POLICY LIFECYCLE</div>
<div class="srule" style="top:4414px"></div>
<div class="fc dash" style="left:65px;top:4429px"><div class="n">01</div><div class="h">PAS · Issue Policy</div><div class="d">Policy dashboard. All<br>active policies viewable.</div><span class="g gb">BOLT-ON</span></div>
<div class="ar" style="left:245px;top:4480px">→</div>
<div class="fc dash" style="left:264px;top:4429px"><div class="n">02</div><div class="h">Company Portal</div><div class="d">Insured logs in.<br>Downloads COI, views<br>policies.</div><span class="g gb">BOLT-ON</span></div>
<div class="ar" style="left:444px;top:4480px">→</div>
<div class="fc dash" style="left:463px;top:4429px"><div class="n">03</div><div class="h">Renewal Workflow</div><div class="d">90/60/30-day reminders.<br>Auto-pre-fill new<br>submission.</div><span class="g gb">BOLT-ON</span></div>
<div class="ar" style="left:642px;top:4480px">→</div>
<div class="fc dash" style="left:661px;top:4429px"><div class="n">04</div><div class="h">Back to Workbench</div><div class="d">Renewal creates new<br>submission. Full cycle<br>restarts.</div><span class="g gb">BOLT-ON</span></div>

<!-- footer -->
<div class="a rule" style="left:32px;top:4660px;width:1536px"></div>
<div class="a secr" style="left:32px;top:4679px;letter-spacing:1px;color:#474c58">BLUEFIELDS · UNDERWRITER'S WORKBENCH — DEEP DIVE</div>
<div class="a secr" style="right:32px;top:4679px;letter-spacing:1px;color:#474c58">V1.0 · APRIL 2026</div>

</body></html>
